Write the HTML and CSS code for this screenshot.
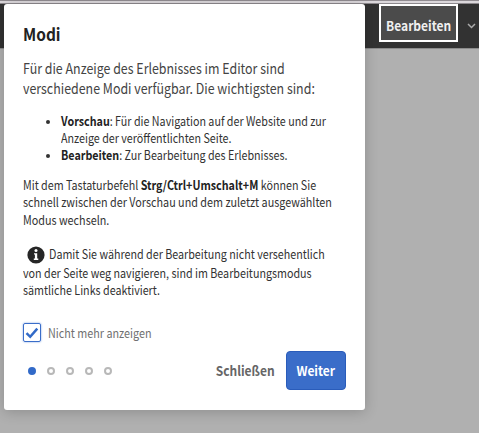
FILE: index.html
```html
<!DOCTYPE html>
<html lang="de">
<head>
<meta charset="utf-8">
<title>Modi</title>
<link rel="stylesheet" href="styles.css">
</head>
<body>
<header class="toolbar">
  <button class="mode"><span class="label">Bearbeiten</span></button>
  <svg class="chevron" width="9" height="6" viewBox="0 0 9 6"><path d="M1 1l3.5 3.5L8 1" fill="none" stroke="#aaa" stroke-width="1.5"/></svg>
</header>
<section class="dialog">
  <h1><span class="line title">Modi</span></h1>
  <p class="lead"><span class="line">Für die Anzeige des Erlebnisses im Editor sind</span><br><span class="line">verschiedene Modi verfügbar. Die wichtigsten sind:</span></p>
  <ul>
    <li><span class="line"><b>Vorschau</b>: Für die Navigation auf der Website und zur</span><br><span class="line">Anzeige der veröffentlichten Seite.</span></li>
    <li><span class="line"><b>Bearbeiten</b>: Zur Bearbeitung des Erlebnisses.</span></li>
  </ul>
  <p class="shortcut"><span class="line">Mit dem Tastaturbefehl <b>Strg/Ctrl+Umschalt+M</b> können Sie</span><br><span class="line wide">schnell zwischen der Vorschau und dem zuletzt ausgewählten</span><br><span class="line wide">Modus wechseln.</span></p>
  <p class="note"><svg class="info" width="18" height="18" viewBox="0 0 18 18"><circle cx="9" cy="9" r="8.6" fill="#262626"/><circle cx="9" cy="4.6" r="1.5" fill="#fff"/><path d="M7 7.3h3.2v5.3h1.1v1.3H6.8v-1.3h1.1v-4H7z" fill="#fff"/></svg><span class="line">Damit Sie während der Bearbeitung nicht versehentlich</span><br><span class="line">von der Seite weg navigieren, sind im Bearbeitungsmodus</span><br><span class="line">sämtliche Links deaktiviert.</span></p>
  <label class="check"><span class="box"><svg width="14" height="12" viewBox="0 0 14 12"><path d="M1.5 6.2l3.7 3.6L12.3 1.6" fill="none" stroke="#326ac8" stroke-width="2.5"/></svg></span><span class="line wide">Nicht mehr anzeigen</span></label>
  <footer>
    <div class="dots"><i class="on"></i><i></i><i></i><i></i><i></i></div>
    <button class="close"><span class="label">Schließen</span></button>
    <button class="next"><span class="label">Weiter</span></button>
  </footer>
</section>
</body>
</html>
```
FILE: styles.css
```css
* { box-sizing: border-box; }
body {
  margin: 0;
  height: 433px;
  overflow: hidden;
  background: #b0b0b0;
  color: #323232;
  font: 12.5px/17px "Noto Sans CJK SC", "Noto Sans", sans-serif;
}
button {
  display: flex;
  align-items: center;
  justify-content: center;
  font: inherit;
  font-size: 13.5px;
  font-weight: bold;
  padding: 0;
  border: 0;
  white-space: nowrap;
}
.line { display: inline-block; transform: scaleX(.858); transform-origin: 0 50%; }
.wide { transform: scaleX(.863); }
.label { display: block; transform: scaleX(.89); }
.toolbar {
  height: 49px;
  border-top: 1px solid #918c91;
  box-shadow: inset 0 2px #dcd8dc, inset 0 3px #8d898d;
  border-bottom: 1px solid #8c8c8c;
  background: #323232;
  display: flex;
  align-items: flex-start;
  justify-content: flex-end;
  padding: 3px 3px 0 0;
}
.mode {
  width: 79px;
  height: 38px;
  border: 2px solid #fff;
  background: #4b4b4b;
  color: #f0f0f0;
  padding-top: 5px;
}
.chevron { margin: 19px 0 0 9px; }
.dialog {
  position: absolute;
  left: 4px;
  top: 4px;
  width: 361px;
  height: 406px;
  padding: 19px 19px 0;
  background: #fff;
  border-radius: 3px;
  box-shadow: 0 2px 14px rgba(0, 0, 0, .2);
  white-space: nowrap;
}
h1 { margin: 0; font-size: 17px; line-height: 22px; font-weight: bold; color: #222; }
.title { transform: scaleX(.91); }
p { margin: 0; }
.lead { margin-top: 13px; font-size: 14.5px; line-height: 19.5px; color: #444; }
.lead .line { transform: scaleX(.856); }
ul { margin: 15px 0 0; padding-left: 38px; }
li::marker { font-size: 11px; }
b { color: #222; }
.shortcut { margin-top: 13px; line-height: 17.3px; }
.note { margin-top: 17px; line-height: 17.6px; }
.info { vertical-align: -5px; margin: 0 4px 0 4px; }
.check { display: flex; align-items: center; margin-top: 24px; color: #707070; height: 19px; }
.box {
  width: 18px;
  height: 19px;
  border: 1.5px solid #3a6dc9;
  border-radius: 2px;
  box-shadow: 0 0 2px #7098dc;
  display: grid;
  place-items: center;
  margin-right: 7px;
}
footer { display: flex; align-items: center; margin-top: 9px; }
.dots { display: flex; gap: 11px; margin-left: 5px; width: 188px; }
.dots i { width: 8px; height: 8px; border: 2px solid #b8b8b8; border-radius: 50%; }
.dots .on { border-color: #326ac8; background: #326ac8; }
.close { width: 59px; background: none; color: #666; }
.next {
  width: 60px;
  height: 39px;
  margin-left: 11px;
  border: 1px solid #2a5cba;
  border-radius: 4px;
  background: #3a6dc9;
  color: #fff;
}
```
